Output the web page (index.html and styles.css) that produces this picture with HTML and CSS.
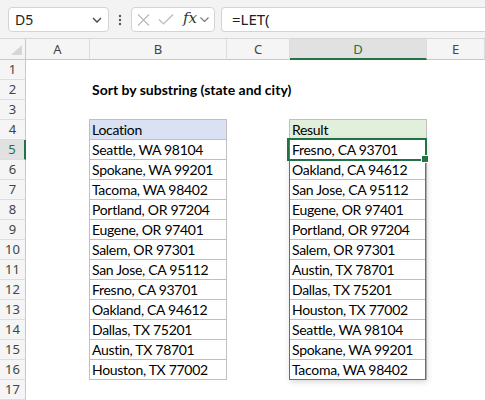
FILE: index.html
```html
<!DOCTYPE html>
<html>
<head>
<meta charset="utf-8">
<link rel="stylesheet" href="styles.css">
</head>
<body>
<div class="toolbar">
  <div class="namebox">
    <span class="nb-text">D5</span>
    <svg class="chev" width="10" height="6" viewBox="0 0 10 6"><path d="M1 1 L5 5 L9 1" fill="none" stroke="#444" stroke-width="1.3"/></svg>
  </div>
  <div class="dots">
    <svg width="4" height="12" viewBox="0 0 4 12"><circle cx="2" cy="2" r="1.2" fill="#555"/><circle cx="2" cy="6" r="1.2" fill="#555"/><circle cx="2" cy="10" r="1.2" fill="#555"/></svg>
  </div>
  <div class="fxbox">
    <svg class="ico-x" width="13" height="12" viewBox="0 0 13 12"><path d="M1 0.5 L12 11.5 M12 0.5 L1 11.5" stroke="#b8b8b8" stroke-width="1.1" fill="none"/></svg>
    <svg class="ico-check" width="16" height="11" viewBox="0 0 16 11"><path d="M1 5.5 L5.5 10 L15 0.5" stroke="#b8b8b8" stroke-width="1.1" fill="none"/></svg>
    <span class="fx">fx</span>
    <svg class="chev-s" width="9" height="5" viewBox="0 0 9 5"><path d="M0.5 0.5 L4.5 4.5 L8.5 0.5" fill="none" stroke="#777" stroke-width="1.1"/></svg>
  </div>
  <div class="formula">=LET(</div>
</div>
<div class="sheet">
  <div class="corner"><span class="tri"></span></div>
  <div class="ch">A</div>
  <div class="ch">B</div>
  <div class="ch">C</div>
  <div class="ch ch-sel">D</div>
  <div class="ch">E</div>

  <div class="rh">1</div><div class="c"></div><div class="c"></div><div class="c"></div><div class="c"></div><div class="c"></div>
  <div class="rh">2</div><div class="c"></div><div class="c title">Sort by substring (state and city)</div><div class="c"></div><div class="c"></div><div class="c"></div>
  <div class="rh">3</div><div class="c"></div><div class="c"></div><div class="c"></div><div class="c"></div><div class="c"></div>
  <div class="rh">4</div><div class="c"></div><div class="c loc-h">Location</div><div class="c"></div><div class="c res-h">Result</div><div class="c"></div>
  <div class="rh rh-sel">5</div><div class="c"></div><div class="c tb">Seattle, WA 98104</div><div class="c"></div><div class="c tb">Fresno, CA 93701</div><div class="c"></div>
  <div class="rh">6</div><div class="c"></div><div class="c tb">Spokane, WA 99201</div><div class="c"></div><div class="c tb">Oakland, CA 94612</div><div class="c"></div>
  <div class="rh">7</div><div class="c"></div><div class="c tb">Tacoma, WA 98402</div><div class="c"></div><div class="c tb">San Jose, CA 95112</div><div class="c"></div>
  <div class="rh">8</div><div class="c"></div><div class="c tb">Portland, OR 97204</div><div class="c"></div><div class="c tb">Eugene, OR 97401</div><div class="c"></div>
  <div class="rh">9</div><div class="c"></div><div class="c tb">Eugene, OR 97401</div><div class="c"></div><div class="c tb">Portland, OR 97204</div><div class="c"></div>
  <div class="rh">10</div><div class="c"></div><div class="c tb">Salem, OR 97301</div><div class="c"></div><div class="c tb">Salem, OR 97301</div><div class="c"></div>
  <div class="rh">11</div><div class="c"></div><div class="c tb">San Jose, CA 95112</div><div class="c"></div><div class="c tb">Austin, TX 78701</div><div class="c"></div>
  <div class="rh">12</div><div class="c"></div><div class="c tb">Fresno, CA 93701</div><div class="c"></div><div class="c tb">Dallas, TX 75201</div><div class="c"></div>
  <div class="rh">13</div><div class="c"></div><div class="c tb">Oakland, CA 94612</div><div class="c"></div><div class="c tb">Houston, TX 77002</div><div class="c"></div>
  <div class="rh">14</div><div class="c"></div><div class="c tb">Dallas, TX 75201</div><div class="c"></div><div class="c tb">Seattle, WA 98104</div><div class="c"></div>
  <div class="rh">15</div><div class="c"></div><div class="c tb">Austin, TX 78701</div><div class="c"></div><div class="c tb">Spokane, WA 99201</div><div class="c"></div>
  <div class="rh">16</div><div class="c"></div><div class="c tb">Houston, TX 77002</div><div class="c"></div><div class="c tb">Tacoma, WA 98402</div><div class="c"></div>
  <div class="rh">17</div><div class="c"></div><div class="c"></div><div class="c"></div><div class="c"></div><div class="c"></div>

  <div class="spill"></div>
  <div class="selection"></div>
  <div class="handle"></div>
</div>
</body>
</html>
```
FILE: styles.css
```css
* { box-sizing: border-box; }
html, body { margin: 0; padding: 0; }
body {
  width: 485px;
  height: 400px;
  overflow: hidden;
  background: #ffffff;
  font-family: "Noto Sans", "Open Sans", sans-serif;
}

/* ---------- toolbar ---------- */
.toolbar {
  height: 39px;
  width: 485px;
  overflow: hidden;
  background: #f3f3f3;
  border-bottom: 1px solid #d6d6d6;
  display: flex;
  align-items: flex-start;
  padding: 7px 0 0 8px;
  white-space: nowrap;
}
.toolbar > * { flex: none; }
.namebox {
  width: 101px;
  height: 25px;
  background: #fff;
  border: 1px solid #d4d4d4;
  border-radius: 4px;
  display: flex;
  align-items: center;
  justify-content: space-between;
  padding: 0 6px 0 6px;
}
.nb-text {
  font-size: 14px;
  color: #222;
  line-height: 1;
}
.dots {
  width: 22px;
  height: 25px;
  display: flex;
  align-items: center;
  justify-content: center;
}
.fxbox {
  width: 84px;
  height: 25px;
  background: #fff;
  border: 1px solid #d4d4d4;
  border-radius: 4px;
  display: flex;
  align-items: center;
  padding: 0 0 0 5px;
}
.ico-x { margin-right: 8px; }
.ico-check { margin-right: 9px; }
.fx {
  font-family: "DejaVu Serif", "Liberation Serif", serif;
  font-style: italic;
  font-size: 15px;
  color: #333;
  line-height: 1;
  margin-top: -2px;
  margin-right: 3px;
}
.toolbar > .formula {
  flex: 1 1 auto;
  height: 25px;
  margin-left: 6px;
  background: #fff;
  border: 1px solid #d4d4d4;
  border-right: none;
  border-radius: 4px 0 0 4px;
  font-size: 15px;
  line-height: 23px;
  padding-left: 10px;
  color: #222;
}

/* ---------- sheet grid ---------- */
.sheet {
  position: relative;
  display: grid;
  grid-template-columns: 26px 64px 137px 63px 137px 58px;
  grid-template-rows: 21px;
  grid-auto-rows: 20px;
  width: 485px;
  height: 361px;
  overflow: hidden;
}
.corner {
  background: #f5f5f5;
  border-right: 1px solid #c8c8c8;
  border-bottom: 1px solid #c8c8c8;
  position: relative;
}
.tri {
  position: absolute;
  right: 3px;
  bottom: 4px;
  width: 0;
  height: 0;
  border-left: 11px solid transparent;
  border-bottom: 10px solid #d6d6d6;
}
.ch {
  background: #f5f5f5;
  border-bottom: 1px solid #c8c8c8;
  border-right: 1px solid #dcdcdc;
  text-align: center;
  font-size: 13px;
  line-height: 21px;
  color: #444;
}
.ch:last-of-type { border-right: none; }
.ch-sel {
  background: #e1e1e1;
  color: #217346;
  border-bottom: 2px solid #217346;
  line-height: 20px;
}
.rh {
  background: #f5f5f5;
  border-right: 1px solid #c8c8c8;
  border-bottom: 1px solid #dedede;
  text-align: center;
  font-size: 13px;
  line-height: 19px;
  color: #444;
}
.rh-sel {
  background: #e1e1e1;
  color: #217346;
  border-right: 2px solid #217346;
}

.c {
  font-family: Lato, "Liberation Sans", sans-serif;
  font-size: 14px;
  line-height: 19px;
  color: #000;
  white-space: nowrap;
  padding-left: 2px;
  min-width: 0;
}
.title {
  font-weight: bold;
}
.tb, .loc-h, .res-h {
  letter-spacing: -0.3px;
}
.tb {
  border-right: 1px solid #bfbfbf;
  border-bottom: 1px solid #bfbfbf;
  box-shadow: -1px 0 0 #bfbfbf;
}
.loc-h, .res-h {
  border-right: 1px solid #bfbfbf;
  border-bottom: 1px solid #bfbfbf;
  box-shadow: -1px 0 0 #bfbfbf, 0 -1px 0 #bfbfbf, -1px -1px 0 #bfbfbf;
}
.loc-h { background: #d9e1f2; }
.res-h { background: #e2efda; }

/* overlays */
.spill {
  position: absolute;
  left: 289px;
  top: 100px;
  width: 137px;
  height: 241px;
  border: 1px solid #4472c4;
  box-shadow: 1px 2px 6px rgba(0, 0, 0, 0.16);
  pointer-events: none;
}
.selection {
  position: absolute;
  left: 287px;
  top: 99px;
  width: 140px;
  height: 23px;
  border: 2px solid #217346;
}
.handle {
  position: absolute;
  left: 422px;
  top: 117px;
  width: 6px;
  height: 6px;
  background: #217346;
  outline: 1px solid #fff;
}
```
